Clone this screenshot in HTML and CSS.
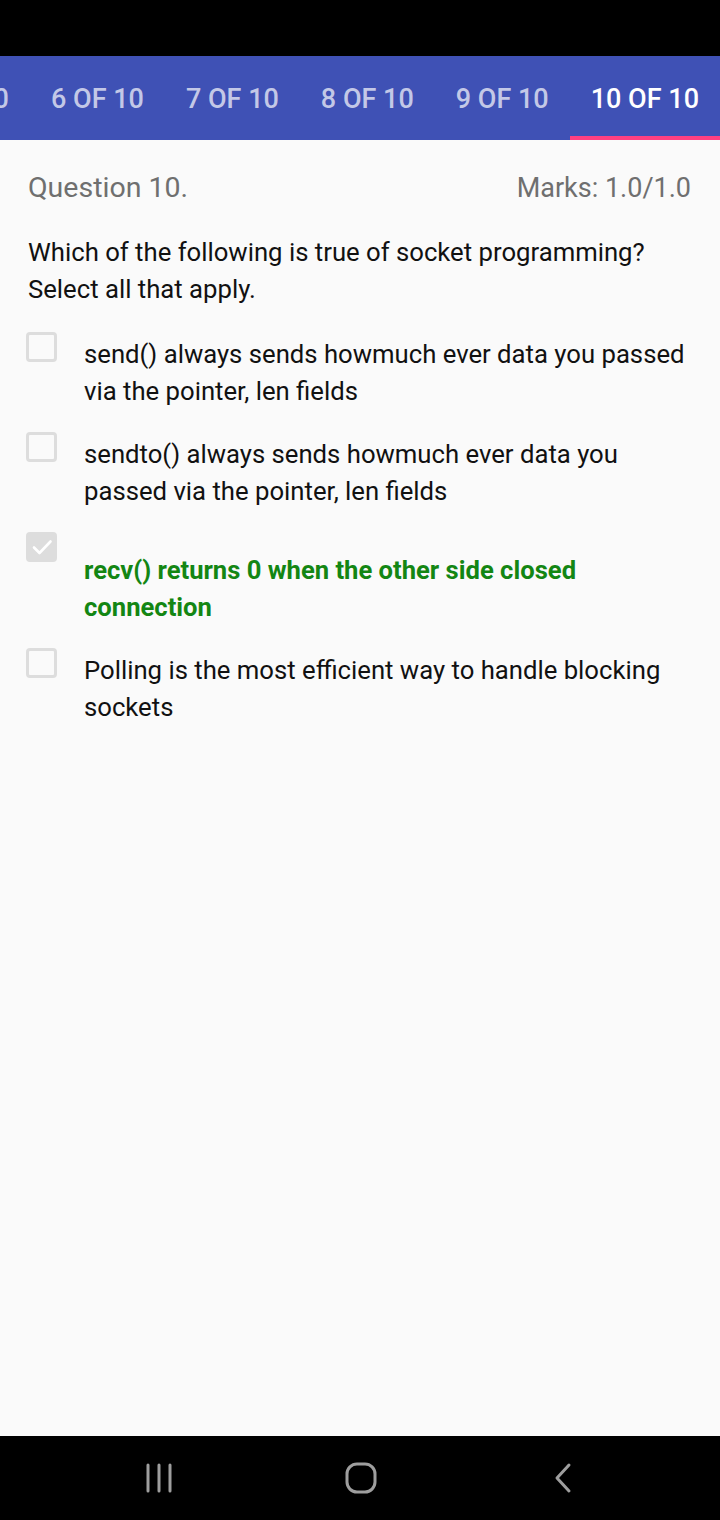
FILE: index.html
```html
<!DOCTYPE html>
<html>
<head>
<meta charset="utf-8">
<link rel="stylesheet" href="styles.css">
</head>
<body>
<div class="status"></div>
<nav class="tabs">
  <div class="tab">1 OF 10</div>
  <div class="tab">2 OF 10</div>
  <div class="tab">3 OF 10</div>
  <div class="tab">4 OF 10</div>
  <div class="tab">5 OF 10</div>
  <div class="tab">6 OF 10</div>
  <div class="tab">7 OF 10</div>
  <div class="tab">8 OF 10</div>
  <div class="tab">9 OF 10</div>
  <div class="tab active">10 OF 10</div>
</nav>
<main class="content">
  <div class="head">
    <span class="qnum">Question 10.</span>
    <span class="marks">Marks: 1.0/1.0</span>
  </div>
  <p class="question">Which of the following is true of socket programming? Select all that apply.</p>
  <div class="options">
    <div class="option">
      <span class="box"></span>
      <span class="label">send() always sends howmuch ever data you passed via the pointer, len fields</span>
    </div>
    <div class="option">
      <span class="box"></span>
      <span class="label">sendto() always sends howmuch ever data you passed via the pointer, len fields</span>
    </div>
    <div class="option">
      <span class="box checked"><svg viewBox="0 0 30 30" width="30" height="30"><path d="M7 15.5 L12.5 21 L23.5 9.5" fill="none" stroke="#fff" stroke-width="2.6" stroke-linecap="round" stroke-linejoin="round"/></svg></span>
      <span class="label correct">recv() returns 0 when the other side closed connection</span>
    </div>
    <div class="option">
      <span class="box"></span>
      <span class="label">Polling is the most efficient way to handle blocking sockets</span>
    </div>
  </div>
</main>
<footer class="navbar">
  <svg class="nav-ico" width="30" height="30" viewBox="0 0 30 30"><path d="M3 2 V28 M14 2 V28 M25 2 V28" stroke="#9e9e9e" stroke-width="3" stroke-linecap="round"/></svg>
  <svg class="nav-ico" width="32" height="32" viewBox="0 0 32 32"><rect x="2" y="2" width="28" height="28" rx="10" fill="none" stroke="#9e9e9e" stroke-width="3"/></svg>
  <svg class="nav-ico back" width="20" height="32" viewBox="0 0 20 32"><path d="M16 3 L4 16 L16 29" fill="none" stroke="#9e9e9e" stroke-width="3" stroke-linecap="round" stroke-linejoin="round"/></svg>
</footer>
</body>
</html>
```

FILE: styles.css
```css
* { box-sizing: border-box; }
html, body { margin: 0; padding: 0; }
body {
  width: 720px;
  height: 1520px;
  display: flex;
  flex-direction: column;
  font-family: Roboto, "Liberation Sans", sans-serif;
  background: #fafafa;
  overflow: hidden;
}
.status { height: 56px; background: #000; flex-shrink: 0; }
.tabs {
  height: 84px;
  flex-shrink: 0;
  background: #3f51b5;
  display: flex;
  justify-content: flex-end;
  overflow: hidden;
}
.tab {
  flex-shrink: 0;
  padding: 6px 21px 0 21px;
  display: flex;
  align-items: center;
  font-size: 27px;
  font-weight: 500;
  color: rgba(255,255,255,0.7);
  white-space: nowrap;
  border-bottom: 4px solid transparent;
}
.tab.active { color: #fff; border-bottom-color: #ff4081; }
.content {
  flex: 1;
  padding: 31px 28px 0 28px;
}
.head {
  display: flex;
  justify-content: space-between;
  align-items: baseline;
  color: #6f6f6f;
}
.qnum { font-size: 28.5px; }
.marks { font-size: 27px; margin-right: 1px; }
.question {
  margin: 30px 0 0 0;
  font-size: 25.7px;
  line-height: 37px;
  color: #111;
}
.options {
  margin-top: 28px;
  display: flex;
  flex-direction: column;
  gap: 26px;
}
.option {
  display: flex;
  align-items: flex-start;
}
.box {
  flex-shrink: 0;
  width: 31px;
  height: 30px;
  margin-left: -2px;
  margin-right: 27px;
  margin-top: -4px;
  border: 3px solid #dddddd;
  border-radius: 4px;
  display: flex;
  align-items: center;
  justify-content: center;
}
.box.checked { background: #dddddd; }
.box svg { display: block; margin: -3px; }
.label {
  font-size: 25.7px;
  line-height: 37px;
  color: #111;
}
.label.correct {
  color: #138613;
  font-weight: 700;
  font-size: 25.6px;
  margin-top: 16px;
}
.navbar {
  height: 84px;
  flex-shrink: 0;
  background: #000;
  display: flex;
  align-items: center;
  gap: 170px;
  padding: 0 0 0 145px;
}
.nav-ico { display: block; }
.nav-ico.back { margin-left: 6px; }
```
